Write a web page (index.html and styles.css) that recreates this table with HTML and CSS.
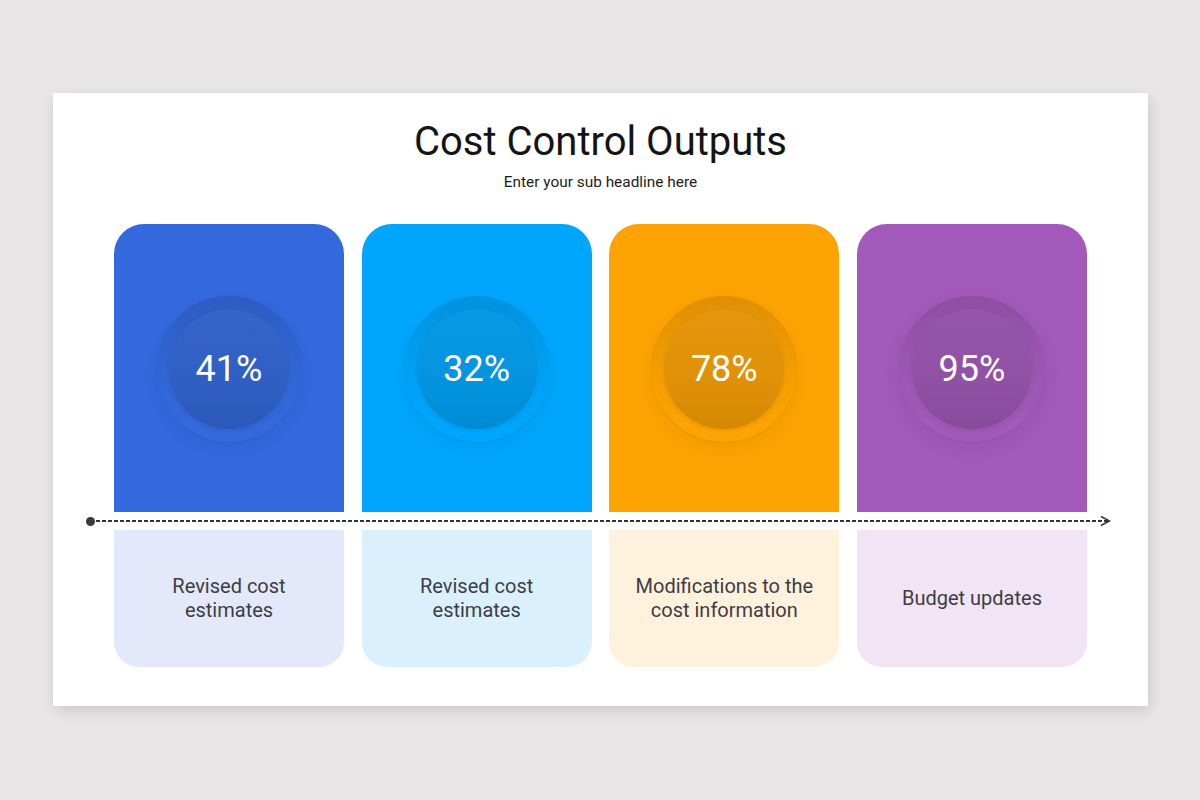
FILE: index.html
```html
<!DOCTYPE html>
<html lang="en">
<head>
<meta charset="utf-8">
<title>Cost Control Outputs</title>
<link rel="stylesheet" href="styles.css">
</head>
<body>
<div class="slide">
  <h1 class="title">Cost Control Outputs</h1>
  <p class="subtitle">Enter your sub headline here</p>
  <div class="board">
    <div class="card-top blue"><div class="ring"><div class="disc">41%</div></div></div>
    <div class="card-top cyan"><div class="ring"><div class="disc">32%</div></div></div>
    <div class="card-top orange"><div class="ring"><div class="disc">78%</div></div></div>
    <div class="card-top purple"><div class="ring"><div class="disc">95%</div></div></div>
    <div class="timeline">
      <span class="dot"></span>
      <span class="dash"></span>
      <svg class="head" width="12" height="12" viewBox="0 0 12 12"><path d="M2 1.5 L10.5 6 L2 10.5" fill="none" stroke="#333" stroke-width="1.5"/></svg>
    </div>
    <div class="card-bottom blue-l"><span>Revised cost<br>estimates</span></div>
    <div class="card-bottom cyan-l"><span>Revised cost<br>estimates</span></div>
    <div class="card-bottom orange-l"><span>Modifications to the<br>cost information</span></div>
    <div class="card-bottom purple-l"><span>Budget updates</span></div>
  </div>
</div>
</body>
</html>
```
FILE: styles.css
```css
html, body {
  margin: 0;
  padding: 0;
}
body {
  background: #e8e6e7;
  font-family: Roboto, "Liberation Sans", sans-serif;
  padding-top: 93px;
  height: 800px;
  box-sizing: border-box;
}
.slide {
  width: 1095px;
  height: 613px;
  margin: 0 0 0 53px;
  background: #ffffff;
  box-shadow: 2px 5px 14px rgba(0, 0, 0, 0.13);
  box-sizing: border-box;
  padding: 25px 61px 0;
}
.title {
  margin: 0;
  font-weight: 400;
  font-size: 40px;
  line-height: 48px;
  text-align: center;
  color: #141414;
}
.subtitle {
  margin: 6px 0 0;
  font-size: 15.4px;
  line-height: 20px;
  text-align: center;
  color: #1c1c1c;
}
.board {
  margin-top: 32px;
  display: grid;
  grid-template-columns: repeat(4, 230px);
  grid-template-rows: 288px 18px 137px;
  column-gap: 17.67px;
}
.card-top {
  border-radius: 30px 30px 0 0;
  display: flex;
  align-items: center;
  justify-content: center;
  padding-top: 2px;
}
.blue { background: #3369dd; }
.cyan { background: #00a6fd; }
.orange { background: #fda303; }
.purple { background: #a259b9; }
.ring {
  width: 146px;
  height: 146px;
  border-radius: 50%;
  background: linear-gradient(to bottom, rgba(0, 0, 0, 0.12), rgba(0, 0, 0, 0.03) 55%, rgba(0, 0, 0, 0) 90%);
  box-shadow: 0 6px 18px rgba(0, 0, 0, 0.06), 0 1px 2px rgba(0, 0, 0, 0.04);
  display: flex;
  align-items: center;
  justify-content: center;
}
.disc {
  width: 120px;
  height: 120px;
  border-radius: 50%;
  background: linear-gradient(to bottom, rgba(255, 255, 255, 0.04), rgba(0, 0, 0, 0.16));
  box-shadow: 0 2px 5px rgba(0, 0, 0, 0.07);
  display: flex;
  align-items: center;
  justify-content: center;
  color: #ffffff;
  font-size: 36px;
  line-height: 1;
}
.timeline {
  grid-column: 1 / -1;
  display: flex;
  align-items: center;
  margin: 0 -24px 0 -28px;
}
.dot {
  width: 9px;
  height: 9px;
  border-radius: 50%;
  background: #3a3a3a;
  flex: none;
}
.dash {
  flex: 1;
  height: 1.5px;
  background-image: repeating-linear-gradient(to right, #333 0, #333 4px, transparent 4px, transparent 6px);
  margin-left: 1px;
}
.head {
  flex: none;
  margin-left: -10px;
}
.card-bottom {
  border-radius: 0 0 25px 25px;
  display: flex;
  align-items: center;
  justify-content: center;
  text-align: center;
  font-size: 20px;
  line-height: 23.5px;
  color: #3d3d44;
}
.blue-l { background: #e3e9fa; }
.cyan-l { background: #daf1fd; }
.orange-l { background: #fef2dc; }
.purple-l { background: #f1e4f4; }
```
